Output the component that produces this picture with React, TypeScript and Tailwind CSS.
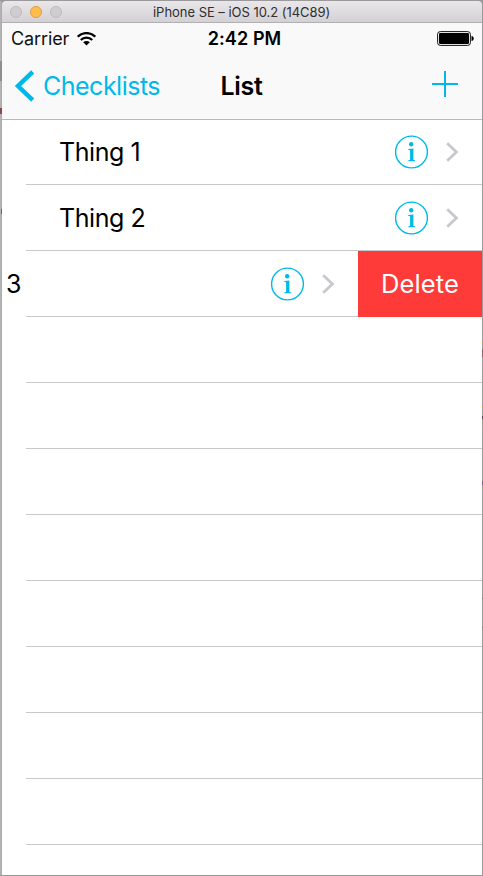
import React from "react";

function InfoIcon() {
  return (
    <svg width="34" height="34" viewBox="0 0 34 34" fill="none" className="shrink-0">
      <circle cx="16.5" cy="17" r="15.9" stroke="#00b9e9" strokeWidth="1.4" />
      <circle cx="16.2" cy="9.2" r="2.2" fill="#00b9e9" />
      <path d="M13.3 14L18.4 13.5V25L20 25.3V26.2H13.3V25.3L15.1 25V15.3L13.3 15Z" fill="#00b9e9" />
    </svg>
  );
}

function Disclosure() {
  return (
    <svg width="14" height="20" viewBox="0 0 14 20" fill="none" className="shrink-0">
      <path d="M1.2 1.2L10.4 10L1.2 18.8" stroke="#c7c7cc" strokeWidth="2.8" />
    </svg>
  );
}

function Accessories() {
  return (
    <div className="flex items-center gap-[17px]">
      <InfoIcon />
      <Disclosure />
    </div>
  );
}

function ItemRow({ label, height }: { label: string; height: string }) {
  return (
    <div className={`flex shrink-0 pl-6 ${height}`}>
      <div className="flex flex-1 items-center justify-between border-b border-[#c8c7cc] pl-[33px] pr-[22px]">
        <span className="text-[25px] leading-[30px] tracking-[-0.45px] text-black">{label}</span>
        <Accessories />
      </div>
    </div>
  );
}

function TitleBar() {
  return (
    <div className="flex h-[22px] shrink-0 items-center rounded-t-[4px] border-b border-[#b1afb1] bg-linear-to-b from-[#e9e7e9] to-[#d3d1d3] pl-2">
      <div className="flex w-[143px] gap-2">
        <span className="size-3 rounded-full border border-[#bdbbbd] bg-[#cfcdcf]" />
        <span className="size-3 rounded-full border border-[#df9f3d] bg-[#ffbd4e]" />
        <span className="size-3 rounded-full border border-[#bdbbbd] bg-[#cfcdcf]" />
      </div>
      <span className="whitespace-nowrap pt-px text-[13px] leading-4 tracking-[-0.03px] text-[#302e30]">iPhone SE – iOS 10.2 (14C89)</span>
    </div>
  );
}

function StatusBar() {
  return (
    <div className="grid h-[31px] grid-cols-3 items-center pl-[9px] pr-[8px]">
      <div className="flex items-center gap-[8px]">
        <span className="text-[18px] leading-5 tracking-[-0.1px] text-[#111]">Carrier</span>
        <svg width="19" height="14" viewBox="0 0 19 14" fill="none">
          <path d="M.7 4.7C5.5-.2 13.5-.2 18.3 4.7M3.8 8C7 4.7 12 4.7 15.2 8" stroke="#000" strokeWidth="2.2" />
          <path d="M6.2 10.3C8 8.6 11 8.6 12.8 10.3L9.5 13.6Z" fill="#000" />
        </svg>
      </div>
      <span className="whitespace-nowrap pl-[4px] text-center text-[18px] font-semibold leading-5 tracking-[0.1px] text-black">2:42 PM</span>
      <svg width="37" height="15" viewBox="0 0 37 15" fill="none" className="justify-self-end">
        <rect x=".6" y=".6" width="32.8" height="13.8" rx="2.7" stroke="#111" strokeWidth="1" />
        <rect x="2" y="2" width="30" height="11" rx="1.2" fill="#000" />
        <path d="M34.5 5C37.4 5.2 37.4 9.8 34.5 10Z" fill="#000" />
      </svg>
    </div>
  );
}

function NavigationBar() {
  return (
    <div className="grid flex-1 grid-cols-[1fr_auto_1fr] items-center pb-[2px] pl-[12px] pr-[24px]">
      <div className="flex items-center gap-[9px]">
        <svg width="20" height="32" viewBox="0 0 20 32" fill="none">
          <path d="M18.7 1.8L4 16L18.7 30.2" stroke="#00b9e9" strokeWidth="4.5" />
        </svg>
        <span className="text-[25px] leading-8 tracking-[-0.5px] text-[#00b9e9]">Checklists</span>
      </div>
      <h1 className="pl-[11px] text-[25px] font-semibold leading-8 tracking-[-0.3px] text-black">List</h1>
      <svg width="26" height="26" viewBox="0 0 26 26" className="mb-[4px] justify-self-end" shapeRendering="crispEdges">
        <path d="M0 12h26v2H0zM12 0h2v26h-2z" fill="#00b9e9" />
      </svg>
    </div>
  );
}

export default function App() {
  return (
    <div className="h-[876px] w-[483px] overflow-hidden bg-[#9b999b] pb-px pt-px font-['Inter','Liberation_Sans',sans-serif]">
      <div className="flex h-[874px]">
        <div className="flex w-[2px] shrink-0 flex-col bg-linear-to-r from-[#b9b9b9] to-[#a5a5a5]">
          <span className="mt-[60px] h-5 bg-[#8f8f8f]" />
          <span className="mt-[27px] h-[6px] bg-[#884a4c]" />
          <span className="mt-[95px] h-[5px] w-px self-end bg-[#7b6544]" />
        </div>
        <div className="flex min-w-0 flex-1 flex-col overflow-hidden">
          <TitleBar />
          <header className="flex h-[97px] shrink-0 flex-col border-b border-[#b9b9bb] bg-[#f9f9f9]">
            <StatusBar />
            <NavigationBar />
          </header>
          <main className="flex flex-1 flex-col overflow-hidden bg-white">
            <ItemRow label="Thing 1" height="h-[65px]" />
            <ItemRow label="Thing 2" height="h-[66px]" />
            <div className="flex h-[66px] shrink-0">
              <div className="flex w-6 items-center pl-[4px]">
                <span className="text-[25px] leading-[30px]">3</span>
              </div>
              <div className="flex flex-1 items-center justify-end border-b border-[#c8c7cc] pr-[22px]">
                <Accessories />
              </div>
              <button className="w-[124px] bg-[#ff3b3a] text-[25.5px] leading-[30px] tracking-[0.1px] text-white">Delete</button>
            </div>
            {Array.from({ length: 8 }, (_, row) => (
              <div key={row} className="ml-6 h-[66px] shrink-0 border-b border-[#c8c7cc]" />
            ))}
          </main>
        </div>
        <div className="flex w-px shrink-0 flex-col bg-[#9b999b]">
          <span className="mt-[340px] h-[2px] bg-[#a89068]" />
          <span className="mt-[6px] h-2 bg-[#96606e]" />
          <span className="mt-[49px] h-[2px] bg-[#a89068]" />
          <span className="mt-2 h-[3px] bg-[#623f62]" />
          <span className="mt-[62px] h-[4px] bg-[#7b6188]" />
          <span className="mt-[113px] h-px bg-[#747474]" />
          <span className="mt-7 h-px bg-[#747474]" />
        </div>
      </div>
    </div>
  );
}
